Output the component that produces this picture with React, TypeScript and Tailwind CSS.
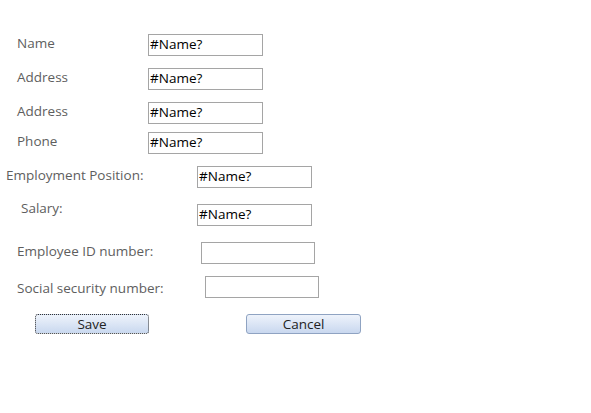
const font = { fontFamily: '"Open Sans", "Noto Sans", sans-serif' };

function Box({ value, w = "w-[115px]" }: { value?: string; w?: string }) {
  return (
    <div
      className={`${w} h-[22px] shrink-0 border border-[#a5a5a5] bg-white pl-[1px] text-[13.5px] leading-[19px] text-black`}
    >
      {value}
    </div>
  );
}

function Row({
  label,
  labelLeft,
  labelTop,
  boxLeft,
  value,
  w,
  mt,
}: {
  label: string;
  labelLeft: string;
  labelTop: string;
  boxLeft: string;
  value?: string;
  w?: string;
  mt: string;
}) {
  return (
    <div className={`flex items-start ${mt}`}>
      <div className={`${labelLeft} ${boxLeft} shrink-0`}>
        <div className={`${labelTop} text-[13.5px] leading-[16px] text-[#5e5e5e] whitespace-nowrap`}>{label}</div>
      </div>
      <Box value={value} w={w} />
    </div>
  );
}

export default function App() {
  return (
    <div className="w-[591px] h-[413px] bg-white pt-[34px]" style={font}>
      <Row label="Name" labelLeft="pl-[17px]" boxLeft="w-[148px]" labelTop="mt-[1px]" value="#Name?" mt="mt-0" />
      <Row label="Address" labelLeft="pl-[17px]" boxLeft="w-[148px]" labelTop="mt-[1px]" value="#Name?" mt="mt-[12px]" />
      <Row label="Address" labelLeft="pl-[17px]" boxLeft="w-[148px]" labelTop="mt-[1px]" value="#Name?" mt="mt-[12px]" />
      <Row label="Phone" labelLeft="pl-[17px]" boxLeft="w-[148px]" labelTop="mt-[1px]" value="#Name?" mt="mt-[8px]" />
      <Row label="Employment Position:" labelLeft="pl-[6px]" boxLeft="w-[197px]" labelTop="mt-[1px]" value="#Name?" mt="mt-[12px]" />
      <Row label="Salary:" labelLeft="pl-[21px]" boxLeft="w-[197px]" labelTop="mt-[-4px]" value="#Name?" mt="mt-[16px]" />
      <Row label="Employee ID number:" labelLeft="pl-[17px]" boxLeft="w-[201px]" labelTop="mt-[1px]" w="w-[114px]" mt="mt-[16px]" />
      <Row label="Social security number:" labelLeft="pl-[17px]" boxLeft="w-[205px]" labelTop="mt-[4px]" w="w-[114px]" mt="mt-[12px]" />
      <div className="flex mt-[16px]">
        <button className="ml-[35px] w-[114px] h-[20px] rounded-[3px] border border-dotted border-[#333] bg-gradient-to-b from-[#eef3fb] to-[#c9d8ef] text-[13.5px] leading-[16px] text-[#222]">
          Save
        </button>
        <button className="ml-[97px] w-[115px] h-[20px] rounded-[3px] border border-[#8fa3c2] bg-gradient-to-b from-[#eef3fb] to-[#c9d8ef] text-[13.5px] leading-[16px] text-[#222]">
          Cancel
        </button>
      </div>
    </div>
  );
}
